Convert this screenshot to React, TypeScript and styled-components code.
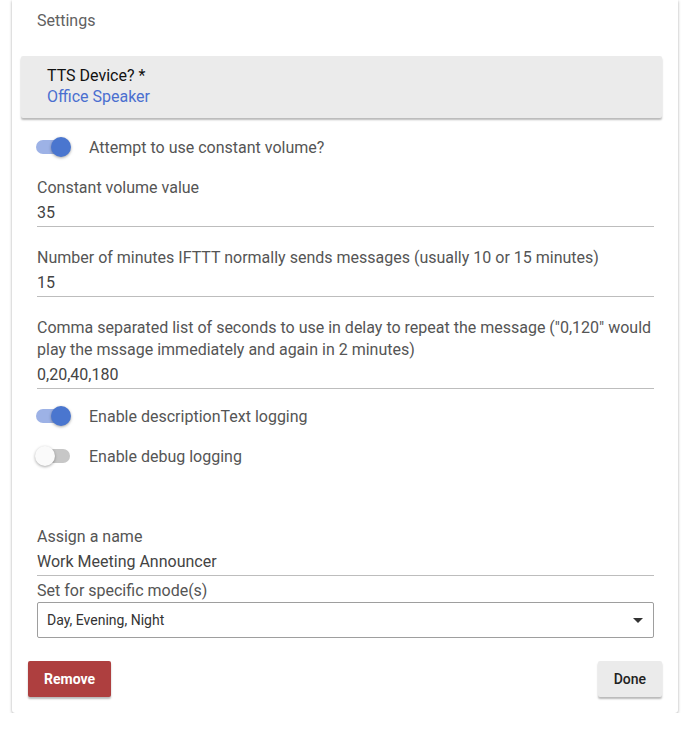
import styled, { createGlobalStyle } from "styled-components";

const Global = createGlobalStyle`
  html, body {
    margin: 0;
    padding: 0;
    background: #ffffff;
    font-family: Roboto, "Liberation Sans", Arial, sans-serif;
  }
`;

const Card = styled.div`
  margin: 0 20px 0 12px;
  padding: 11px 16px 16px 16px;
  background: #fff;
  border-radius: 0 0 3px 3px;
  box-shadow: 0 1px 3px rgba(0, 0, 0, 0.35);
`;

const Heading = styled.div`
  padding-left: 9px;
  font-size: 16px;
  line-height: 20px;
  color: #616161;
`;

const DeviceBox = styled.div`
  margin: 25px 0 0 -7px;
  padding: 9px 26px 11px 26px;
  background: #ebebeb;
  border-radius: 2px;
  box-shadow: 0 2px 2px rgba(0, 0, 0, 0.28);
`;

const DeviceTitle = styled.div`
  font-size: 16px;
  line-height: 21px;
  color: #111;
`;

const DeviceValue = styled.div`
  font-size: 16px;
  line-height: 21px;
  color: #4a6fd0;
`;

const Body = styled.div`
  padding: 0 8px 0 9px;
`;

const ToggleRow = styled.div<{ $top?: number }>`
  display: flex;
  align-items: center;
  height: 40px;
  margin-top: ${(p) => p.$top ?? 0}px;
  gap: 19px;
`;

const Track = styled.div<{ $on: boolean }>`
  position: relative;
  width: 34px;
  height: 14px;
  border-radius: 7px;
  margin-left: -1px;
  background: ${(p) => (p.$on ? "#9db2e6" : "#c7c7c7")};
`;

const Knob = styled.div<{ $on: boolean }>`
  position: absolute;
  top: -3px;
  left: ${(p) => (p.$on ? "15px" : "-1px")};
  width: 20px;
  height: 20px;
  border-radius: 50%;
  background: ${(p) => (p.$on ? "#4a76cf" : "#fafafa")};
  box-shadow: 0 1px 3px rgba(0, 0, 0, 0.35);
`;

const ToggleLabel = styled.div`
  font-size: 16px;
  color: #555;
`;

const Field = styled.div<{ $top: number }>`
  margin-top: ${(p) => p.$top}px;
  border-bottom: 1px solid #bdbdbd;
  padding-bottom: 1px;
`;

const Label = styled.div`
  font-size: 16px;
  line-height: 22px;
  color: #555;
`;

const Value = styled.div`
  padding-top: 2px;
  font-size: 16px;
  line-height: 24px;
  color: #444;
`;

const SelectLabel = styled(Label)`
  margin-top: 4px;
`;

const Select = styled.div`
  display: flex;
  align-items: center;
  justify-content: space-between;
  height: 34px;
  padding: 0 10px 0 9px;
  border: 1px solid #9e9e9e;
  border-radius: 2px;
  font-size: 14px;
  color: #333;
`;

const Caret = styled.span`
  width: 0;
  height: 0;
  border-left: 5px solid transparent;
  border-right: 5px solid transparent;
  border-top: 5px solid #333;
`;

const Actions = styled.div`
  display: flex;
  justify-content: space-between;
  margin-top: 23px;
`;

const Button = styled.button<{ $danger?: boolean }>`
  height: 36px;
  padding: 0 16px;
  border: none;
  border-radius: 2px;
  font-family: Roboto, "Liberation Sans", Arial, sans-serif;
  font-size: 14px;
  font-weight: ${(p) => (p.$danger ? 700 : 500)};
  color: ${(p) => (p.$danger ? "#fff" : "#222")};
  background: ${(p) => (p.$danger ? "#ae3f3f" : "#ebebeb")};
  box-shadow: 0 2px 2px rgba(0, 0, 0, 0.28);
`;

function Toggle({ on, label, top }: { on: boolean; label: string; top?: number }) {
  return (
    <ToggleRow $top={top}>
      <Track $on={on}>
        <Knob $on={on} />
      </Track>
      <ToggleLabel>{label}</ToggleLabel>
    </ToggleRow>
  );
}

export default function App() {
  return (
    <>
      <Global />
      <Card>
        <Heading>Settings</Heading>
        <DeviceBox>
          <DeviceTitle>TTS Device? *</DeviceTitle>
          <DeviceValue>Office Speaker</DeviceValue>
        </DeviceBox>
        <Body>
          <Toggle on label="Attempt to use constant volume?" top={9} />
          <Field $top={10}>
            <Label>Constant volume value</Label>
            <Value>35</Value>
          </Field>
          <Field $top={20}>
            <Label>Number of minutes IFTTT normally sends messages (usually 10 or 15 minutes)</Label>
            <Value>15</Value>
          </Field>
          <Field $top={20}>
            <Label>
              Comma separated list of seconds to use in delay to repeat the message ("0,120" would
              play the mssage immediately and again in 2 minutes)
            </Label>
            <Value>0,20,40,180</Value>
          </Field>
          <Toggle on label="Enable descriptionText logging" top={7} />
          <Toggle on={false} label="Enable debug logging" />
          <Field $top={50}>
            <Label>Assign a name</Label>
            <Value>Work Meeting Announcer</Value>
          </Field>
          <SelectLabel>Set for specific mode(s)</SelectLabel>
          <Select>
            <span>Day, Evening, Night</span>
            <Caret />
          </Select>
        </Body>
        <Actions>
          <Button $danger>Remove</Button>
          <Button>Done</Button>
        </Actions>
      </Card>
    </>
  );
}
